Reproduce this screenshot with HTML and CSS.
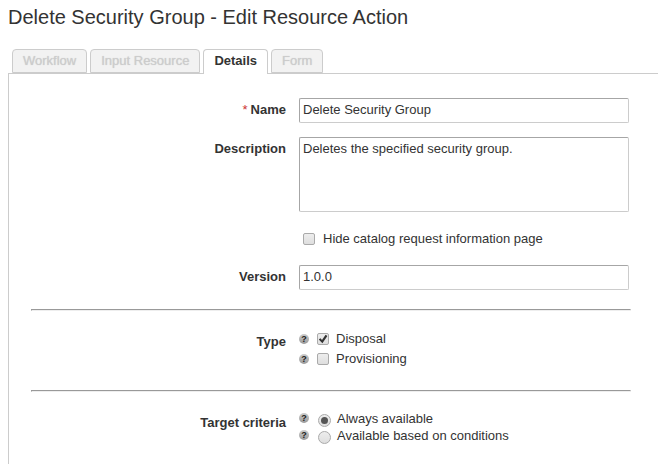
FILE: index.html
```html
<!DOCTYPE html>
<html lang="en">
<head>
    <meta charset="UTF-8">
    <meta name="viewport" content="width=device-width, initial-scale=1.0">
    <title>Edit Resource Action</title>
    <link rel="stylesheet" href="styles.css">
</head>
<body>
    <h1>Delete Security Group - Edit Resource Action</h1>

    <!-- Tabs -->
    <div class="tabs" role="tablist">
        <button type="button" class="tab" role="tab" disabled>Workflow</button>
        <button type="button" class="tab" role="tab" disabled>Input Resource</button>
        <button type="button" class="tab active" role="tab" aria-selected="true">Details</button>
        <button type="button" class="tab" role="tab" disabled>Form</button>
    </div>

    <!-- Details Form -->
    <form class="panel">
        <div class="form-row">
            <label class="row-label" for="name"><span class="required">*</span>Name</label>
            <input class="text-field" type="text" id="name" name="name" value="Delete Security Group" required>
        </div>
        <div class="form-row">
            <label class="row-label" for="description">Description</label>
            <textarea class="text-field" id="description" name="description">Deletes the specified security group.</textarea>
        </div>
        <div class="form-row">
            <div class="option hide-option">
                <input type="checkbox" id="hide-info" name="hide-info">
                <label for="hide-info">Hide catalog request information page</label>
            </div>
        </div>
        <div class="form-row">
            <label class="row-label" for="version">Version</label>
            <input class="text-field" type="text" id="version" name="version" value="1.0.0">
        </div>

        <hr>

        <div class="form-row" role="group" aria-labelledby="type-label">
            <span class="row-label" id="type-label">Type</span>
            <div class="options">
                <div class="option">
                    <button type="button" class="help">?</button>
                    <input type="checkbox" id="disposal" name="type" checked>
                    <label for="disposal">Disposal</label>
                </div>
                <div class="option">
                    <button type="button" class="help">?</button>
                    <input type="checkbox" id="provisioning" name="type">
                    <label for="provisioning">Provisioning</label>
                </div>
            </div>
        </div>

        <hr>

        <div class="form-row" role="radiogroup" aria-labelledby="target-label">
            <span class="row-label" id="target-label">Target criteria</span>
            <div class="options radio-options">
                <div class="option">
                    <button type="button" class="help">?</button>
                    <input type="radio" id="always" name="target" checked>
                    <label for="always">Always available</label>
                </div>
                <div class="option">
                    <button type="button" class="help">?</button>
                    <input type="radio" id="conditions" name="target">
                    <label for="conditions">Available based on conditions</label>
                </div>
            </div>
        </div>
    </form>
</body>
</html>
```
FILE: styles.css
```css
* {
    box-sizing: border-box;
}
body {
    display: flex;
    flex-direction: column;
    min-height: 100vh;
    margin: 0 0 0 8px;
    font-family: "Liberation Sans", Arial, sans-serif;
    font-size: 13px;
    line-height: 16px;
    color: #333;
    background-color: #fff;
}
h1 {
    margin: 5px 0 20px;
    font-size: 20px;
    line-height: 24px;
    font-weight: normal;
}
input,
textarea,
button {
    margin: 0;
    font: inherit;
    color: inherit;
}

/* Tabs */
.tabs {
    display: flex;
    gap: 3px;
    padding-left: 4px;
}
.tab {
    height: 24px;
    padding: 0 10px;
    border: 1px solid #ccc;
    border-radius: 4px 4px 0 0;
    color: #ccc;
    text-shadow: 0 0 1px #ccc;
    background-color: #f2f2f2;
}
.tab.active {
    z-index: 1;
    height: 25px;
    margin-bottom: -1px;
    padding-bottom: 2px;
    border-bottom: none;
    font-weight: bold;
    color: #333;
    text-shadow: none;
    background-color: #fff;
}

/* Form */
.panel {
    display: flex;
    flex-direction: column;
    flex: 1;
    gap: 14px;
    padding: 24px 27px 16px 22px;
    border-top: 1px solid #ccc;
    border-left: 1px solid #ccc;
}
.form-row {
    display: grid;
    grid-template-columns: 255px 1fr;
    column-gap: 13px;
    align-items: start;
    padding-right: 2px;
}
.row-label {
    padding-top: 4px;
    text-align: right;
    font-weight: bold;
}
.required {
    margin-right: 3px;
    font-weight: normal;
    color: #c33;
}
.text-field {
    display: block;
    width: 100%;
    height: 25px;
    padding: 3px 3px 5px;
    border: 1px solid #ccc;
    border-top-color: #a6a6a6;
    border-left-color: #a6a6a6;
    border-radius: 2px;
    background-color: #fff;
}
textarea.text-field {
    height: 75px;
    resize: none;
}
hr {
    width: 100%;
    height: 2px;
    margin: 5px 0;
    border: 1px solid #eee;
    border-top-color: #999;
    border-left-color: #999;
}

/* Checkboxes and radios */
.options {
    display: flex;
    flex-direction: column;
    gap: 4px;
    padding: 1px 0 4px;
}
.option {
    display: flex;
    align-items: center;
}
.option label {
    margin-left: 7px;
}
.hide-option {
    grid-column: 2;
    padding: 5px 0 4px 4px;
}
.hide-option label {
    margin-left: 8px;
}
input[type="checkbox"],
input[type="radio"] {
    appearance: none;
    display: grid;
    place-items: center;
    width: 12px;
    height: 12px;
    border: 1px solid #aaa;
    border-radius: 2px;
    background: linear-gradient(#ededed, #dedede);
}
input[type="checkbox"]:checked::before {
    content: "";
    width: 10px;
    height: 10px;
    background-color: #333;
    clip-path: polygon(8% 55%, 24% 42%, 40% 60%, 76% 8%, 94% 20%, 44% 92%);
}
input[type="radio"] {
    width: 13px;
    height: 13px;
    border-radius: 50%;
}
input[type="radio"]:checked::before {
    content: "";
    width: 7px;
    height: 7px;
    border-radius: 50%;
    background-color: #555;
}
.help {
    display: grid;
    place-items: center;
    width: 10px;
    height: 10px;
    margin-right: 8px;
    padding: 0;
    border: none;
    border-radius: 50%;
    font-size: 9px;
    line-height: 10px;
    font-weight: bold;
    color: #222;
    background: linear-gradient(#ccc, #999);
}
.radio-options {
    gap: 1px;
    padding-top: 0;
}
.radio-options .option {
    align-items: start;
}
.radio-options .help {
    margin: 2px 9px 0 0;
}
.radio-options input {
    margin-top: 3px;
}
.radio-options label {
    margin-left: 6px;
}
```
